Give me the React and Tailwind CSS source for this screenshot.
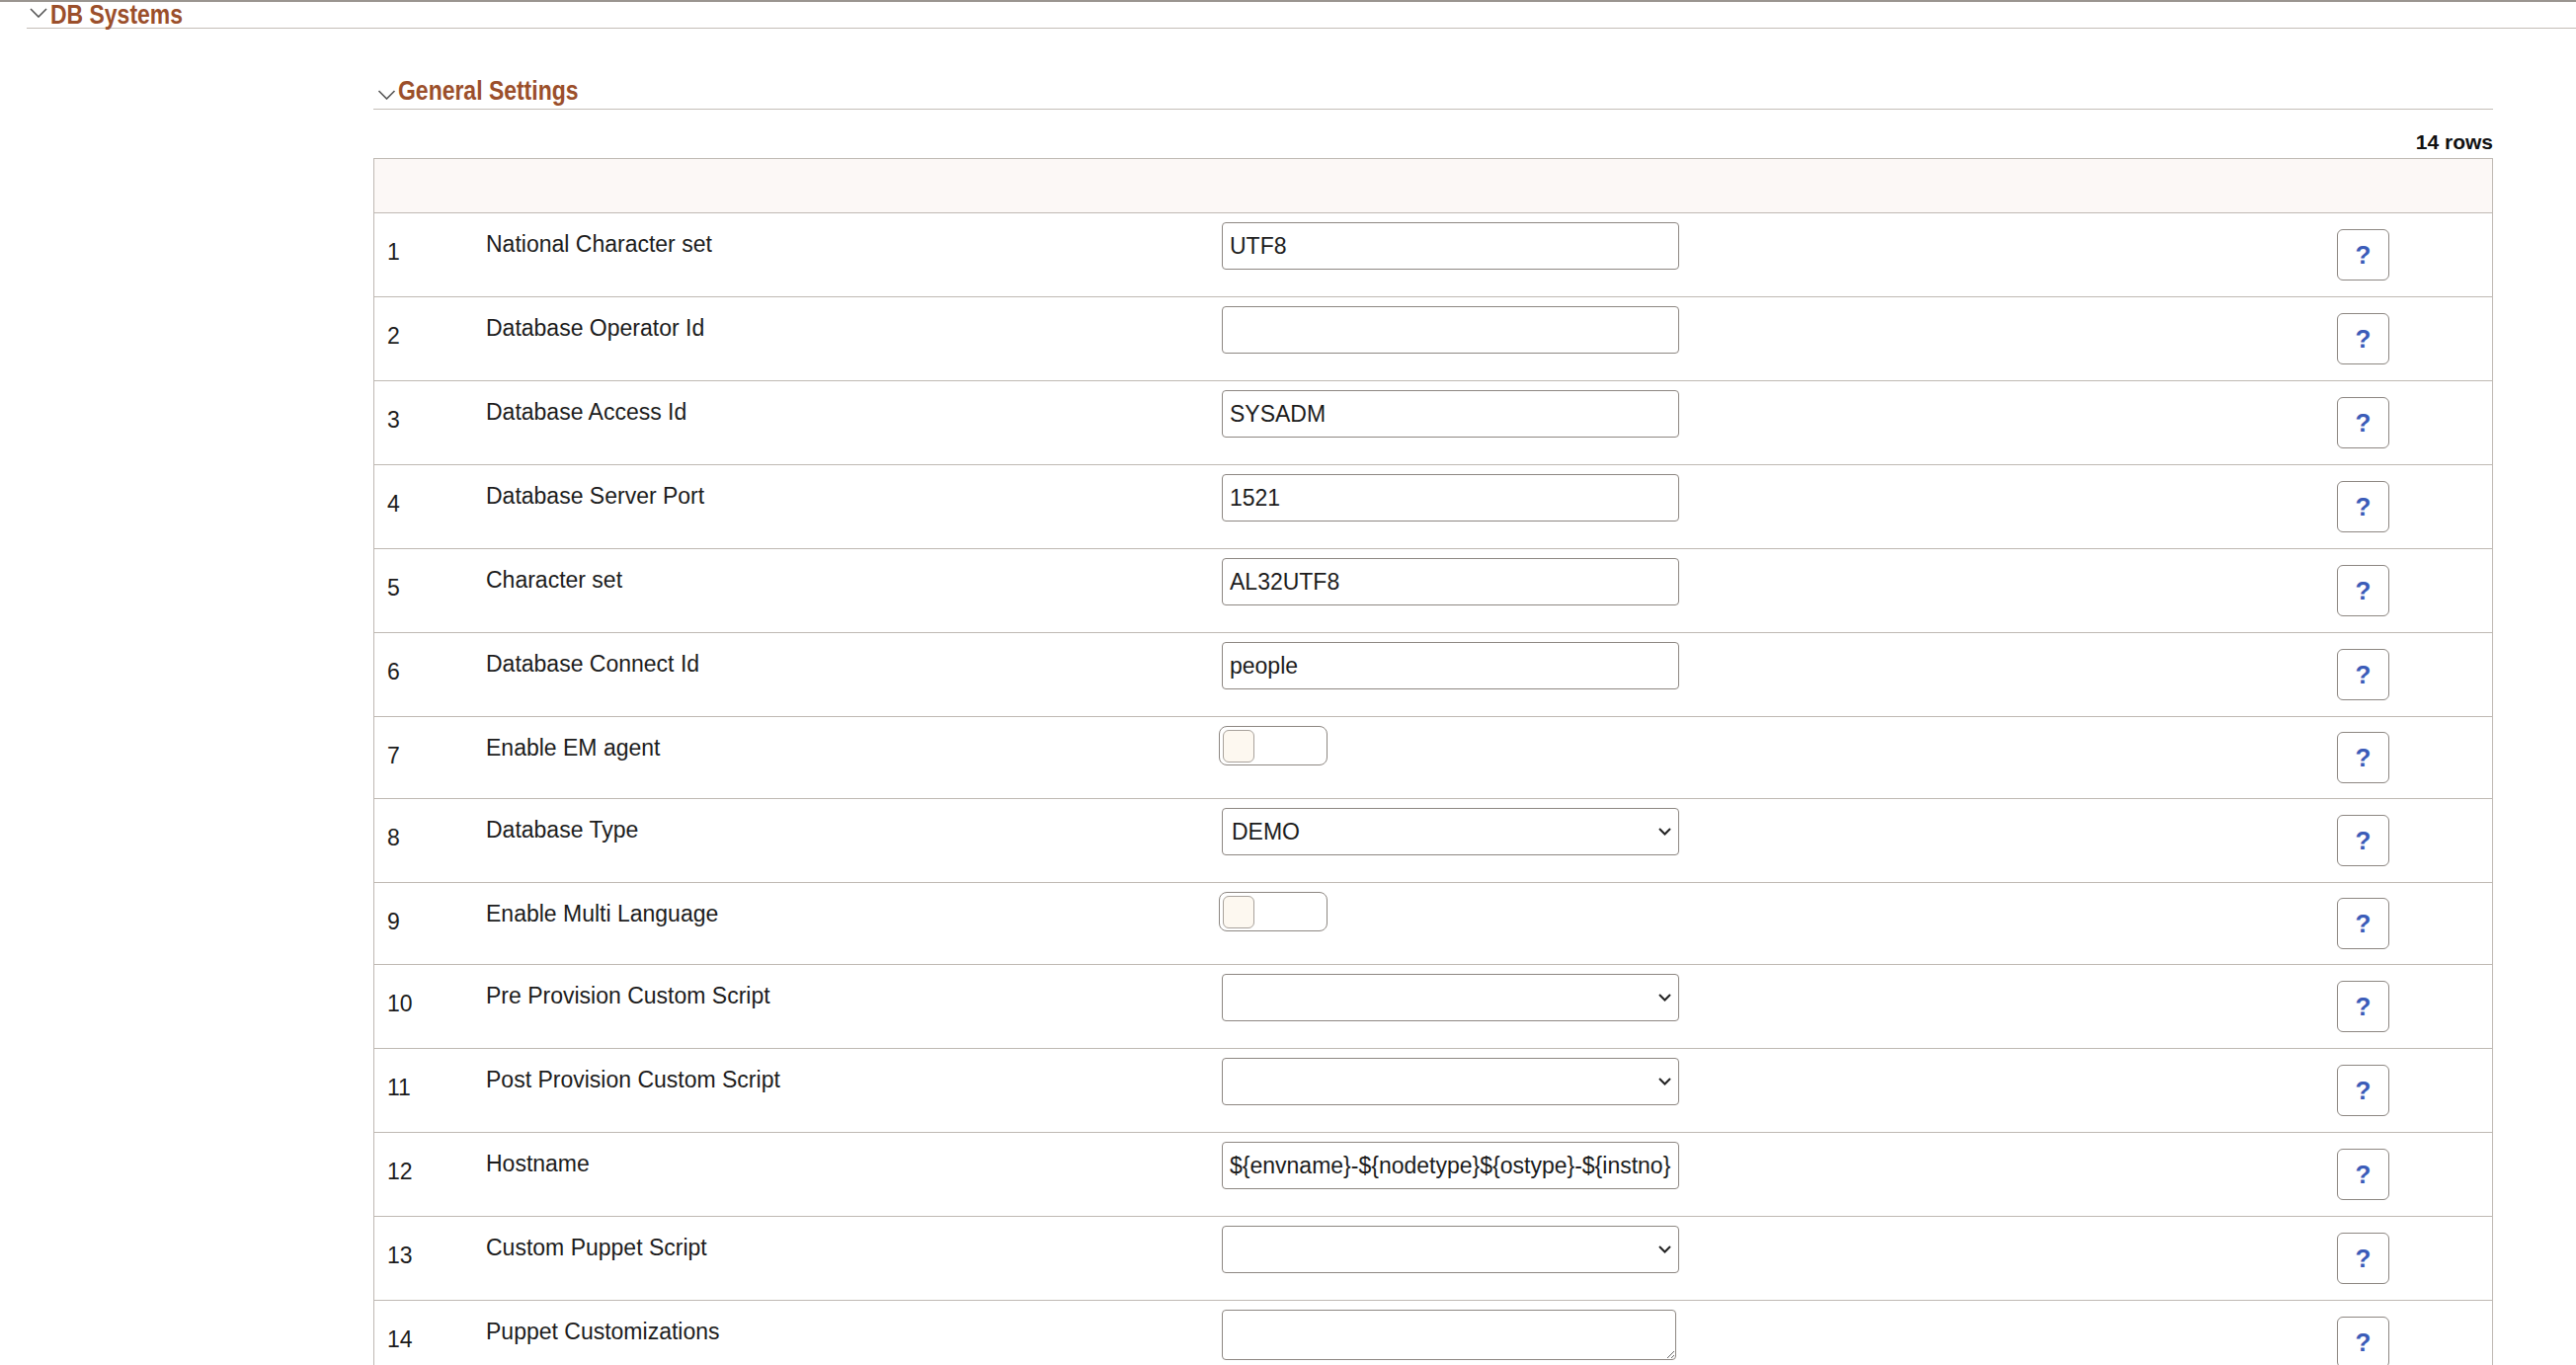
import React from "react";

const rows = [
  { n: 1, label: "National Character set", type: "input", value: "UTF8" },
  { n: 2, label: "Database Operator Id", type: "input", value: "" },
  { n: 3, label: "Database Access Id", type: "input", value: "SYSADM" },
  { n: 4, label: "Database Server Port", type: "input", value: "1521" },
  { n: 5, label: "Character set", type: "input", value: "AL32UTF8" },
  { n: 6, label: "Database Connect Id", type: "input", value: "people" },
  { n: 7, label: "Enable EM agent", type: "toggle" },
  { n: 8, label: "Database Type", type: "select", value: "DEMO" },
  { n: 9, label: "Enable Multi Language", type: "toggle" },
  { n: 10, label: "Pre Provision Custom Script", type: "select", value: "" },
  { n: 11, label: "Post Provision Custom Script", type: "select", value: "" },
  { n: 12, label: "Hostname", type: "input", value: "${envname}-${nodetype}${ostype}-${instno}" },
  { n: 13, label: "Custom Puppet Script", type: "select", value: "" },
  { n: 14, label: "Puppet Customizations", type: "textarea" },
];

function Chevron({ className }) {
  return (
    <svg className={className} viewBox="0 0 18 10" fill="none">
      <polyline points="1,1 9,9 17,1" stroke="#555" strokeWidth="1.6" />
    </svg>
  );
}

function Field({ row }) {
  if (row.type === "toggle") {
    return (
      <div className="ml-[-3px] w-[110px] h-[40px] rounded-[8px] border border-[#8d8782] pl-[3px] pt-[3px]">
        <div className="w-[32px] h-[33px] rounded-[6px] border border-[#a8a29c] bg-[#fdf8f0]" />
      </div>
    );
  }
  if (row.type === "select") {
    return (
      <div className="relative w-[463px]">
        <select
          value={row.value}
          onChange={() => {}}
          className="block w-full h-[48px] appearance-none rounded-[4px] border border-[#8d8782] bg-white pl-[9px] text-[23px] text-[#1c1c1c] outline-none"
        >
          <option value="">{""}</option>
          <option value="DEMO">DEMO</option>
        </select>
        <svg className="absolute right-[8px] top-[20px] w-[13px] h-[8px] pointer-events-none" viewBox="0 0 13 8" fill="none">
          <polyline points="1,1 6.5,6.5 12,1" stroke="#222" strokeWidth="2" />
        </svg>
      </div>
    );
  }
  if (row.type === "textarea") {
    return (
      <textarea
        readOnly
        className="block w-[460px] h-[51px] rounded-[4px] border border-[#8d8782] bg-white outline-none"
      />
    );
  }
  return (
    <input
      readOnly
      value={row.value}
      className="block w-[463px] h-[48px] rounded-[4px] border border-[#8d8782] bg-white pl-[7px] text-[23px] text-[#1c1c1c] outline-none"
    />
  );
}

export default function App() {
  return (
    <div className="h-[1382px] overflow-hidden bg-white font-['Liberation_Sans',Arial,sans-serif] text-[#1c1c1c]">
      <div className="h-[2px] bg-[#9a9590]" />

      {/* DB Systems */}
      <div className="ml-[27px] h-[27px] border-b border-[#c4beb8] flex items-start">
        <Chevron className="ml-[3px] mt-[6px] w-[18px] h-[10px] shrink-0" />
        <h1 className="ml-[3px] -mt-[1px] inline-block origin-left scale-x-[0.82] whitespace-nowrap text-[28px] leading-none font-bold text-[#9b4f2b]">
          DB Systems
        </h1>
      </div>

      <div className="ml-[378px] w-[2146px]">
        {/* General Settings */}
        <div className="h-[82px] border-b border-[#c4beb8] pt-[49px] flex items-start">
          <Chevron className="ml-[4px] mt-[13px] w-[19px] h-[10px] shrink-0" />
          <h2 className="ml-[2px] inline-block origin-left scale-x-[0.82] whitespace-nowrap text-[28px] leading-none font-bold text-[#9b4f2b]">
            General Settings
          </h2>
        </div>

        <div className="mt-[22px] text-right text-[21px] leading-none font-bold text-[#111]">14 rows</div>

        {/* grid */}
        <div className="mt-[6px] border border-[#bfb9b3]">
          <div className="h-[55px] bg-[#fcf8f6] border-b border-[#bfb9b3]" />
          {rows.map((row) => (
            <div
              key={row.n}
              className={`flex border-b border-[#bfb9b3] ${row.type === "toggle" ? "h-[83px]" : "h-[85px]"}`}
            >
              <div className="w-[113px] shrink-0 pl-[13px] pt-[28px] text-[23px] leading-none">{row.n}</div>
              <div className="w-[745px] shrink-0 pt-[20px] text-[23px] leading-none">{row.label}</div>
              <div className="w-[1129px] shrink-0 pt-[9px]">
                <Field row={row} />
              </div>
              <div className="flex items-center">
                <button className="w-[53px] h-[52px] rounded-[6px] border border-[#8d8782] bg-white flex items-center justify-center text-[26px] leading-none font-bold text-[#3b5cb8]">
                  ?
                </button>
              </div>
            </div>
          ))}
        </div>
      </div>
    </div>
  );
}
